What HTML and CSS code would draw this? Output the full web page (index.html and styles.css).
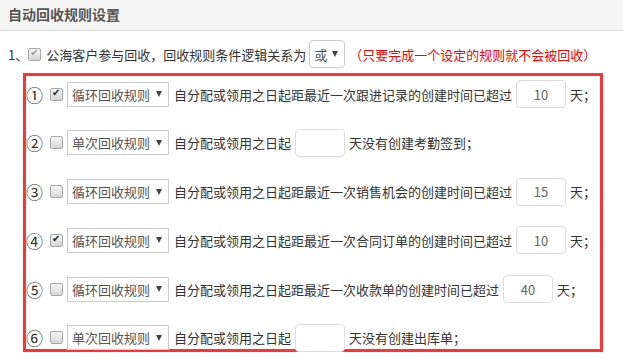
FILE: index.html
```html
<!DOCTYPE html>
<html lang="zh-CN">
<head>
    <meta charset="UTF-8">
    <meta name="viewport" content="width=device-width, initial-scale=1.0">
    <title>自动回收规则设置</title>
    <link rel="stylesheet" href="styles.css">
</head>
<body>
    <div class="panel-head">自动回收规则设置</div>
    <div class="panel-body">
        <div class="intro">
            <span class="idx">1、</span>
            <input type="checkbox" class="chk" checked disabled>
            <span class="lead">公海客户参与回收，回收规则条件逻辑关系为</span>
            <span class="sel sel-logic">
                <select name="logic"><option>或</option><option>且</option></select>
            </span>
            <span class="tip">（只要完成一个设定的规则就不会被回收）</span>
        </div>

        <div class="rules">
            <div class="rule">
                <span class="no">①</span>
                <input type="checkbox" class="chk" checked>
                <span class="sel sel-type">
                    <select><option>循环回收规则</option><option>单次回收规则</option></select>
                </span>
                <span class="lead">自分配或领用之日起距最近一次跟进记录的创建时间已超过</span>
                <input type="text" class="days" value="10">
                <span>天；</span>
            </div>
            <div class="rule">
                <span class="no">②</span>
                <input type="checkbox" class="chk">
                <span class="sel sel-type">
                    <select><option>单次回收规则</option><option>循环回收规则</option></select>
                </span>
                <span class="lead">自分配或领用之日起</span>
                <input type="text" class="days" value="">
                <span>天没有创建考勤签到；</span>
            </div>
            <div class="rule">
                <span class="no">③</span>
                <input type="checkbox" class="chk">
                <span class="sel sel-type">
                    <select><option>循环回收规则</option><option>单次回收规则</option></select>
                </span>
                <span class="lead">自分配或领用之日起距最近一次销售机会的创建时间已超过</span>
                <input type="text" class="days" value="15">
                <span>天；</span>
            </div>
            <div class="rule">
                <span class="no">④</span>
                <input type="checkbox" class="chk" checked>
                <span class="sel sel-type">
                    <select><option>循环回收规则</option><option>单次回收规则</option></select>
                </span>
                <span class="lead">自分配或领用之日起距最近一次合同订单的创建时间已超过</span>
                <input type="text" class="days" value="10">
                <span>天；</span>
            </div>
            <div class="rule">
                <span class="no">⑤</span>
                <input type="checkbox" class="chk">
                <span class="sel sel-type">
                    <select><option>循环回收规则</option><option>单次回收规则</option></select>
                </span>
                <span class="lead">自分配或领用之日起距最近一次收款单的创建时间已超过</span>
                <input type="text" class="days" value="40">
                <span>天；</span>
            </div>
            <div class="rule">
                <span class="no">⑥</span>
                <input type="checkbox" class="chk">
                <span class="sel sel-type">
                    <select><option>单次回收规则</option><option>循环回收规则</option></select>
                </span>
                <span class="lead">自分配或领用之日起</span>
                <input type="text" class="days" value="">
                <span>天没有创建出库单；</span>
            </div>
        </div>
    </div>
</body>
</html>
```

FILE: styles.css
```css
body {
    margin: 0;
    font-family: "Noto Sans CJK SC", sans-serif;
    font-size: 13px;
    color: #333;
    background: #fff;
}
.panel-head {
    height: 30px;
    line-height: 28px;
    padding-left: 8px;
    background: #f5f5f5;
    border-bottom: 1px solid #ddd;
    font-size: 14px;
    font-weight: bold;
    color: #555;
}
.intro {
    display: flex;
    align-items: center;
    height: 28px;
    margin: 9px 0 5px 8px;
    white-space: nowrap;
}
.lead {
    margin-left: 5px;
}
.tip {
    margin-left: 4px;
    color: #f00;
}
.chk {
    appearance: none;
    position: relative;
    width: 13px;
    height: 13px;
    margin: 0;
    box-sizing: border-box;
    border: 1px solid #a8a8a8;
    border-radius: 2px;
    background: linear-gradient(#f6f6f6, #d6d6d6);
}
.chk:checked::after {
    content: "✔";
    position: absolute;
    left: 1px;
    top: -2px;
    font-family: "DejaVu Sans", sans-serif;
    font-size: 10px;
    color: #222;
}
.chk:disabled::after {
    color: #999;
}
.sel {
    position: relative;
    display: inline-block;
    margin-left: 3px;
}
.sel select {
    appearance: none;
    display: block;
    margin: 0;
    padding: 0 0 0 4px;
    font: inherit;
    color: #555;
    background: #fff;
    border: 1px solid #ccc;
    box-sizing: border-box;
}
.sel::after {
    content: "";
    position: absolute;
    top: 50%;
    right: 7px;
    margin-top: -3px;
    border-left: 3px solid transparent;
    border-right: 3px solid transparent;
    border-top: 6px solid #444;
    pointer-events: none;
}
.sel-logic select {
    width: 36px;
    height: 28px;
    border-radius: 4px;
}
.sel-type select {
    width: 102px;
    height: 25px;
}
.rules {
    width: 574px;
    margin-left: 23px;
    padding: 4px 0 0 0;
    border: 3px solid #f33;
}
.rule {
    display: flex;
    align-items: center;
    height: 28px;
    margin-bottom: 20.8px;
    white-space: nowrap;
}
.rule:last-child {
    margin-bottom: -3px;
}
.no {
    width: 17px;
    font-size: 17px;
    line-height: 1;
}
.rule .chk {
    margin-left: 7px;
}
.rule .sel {
    margin-left: 4px;
}
.days {
    width: 50px;
    height: 28px;
    margin: 0 4px;
    padding: 0;
    box-sizing: border-box;
    border: 1px solid #ddd;
    border-radius: 4px;
    font: inherit;
    color: #666;
    text-align: center;
}
```
